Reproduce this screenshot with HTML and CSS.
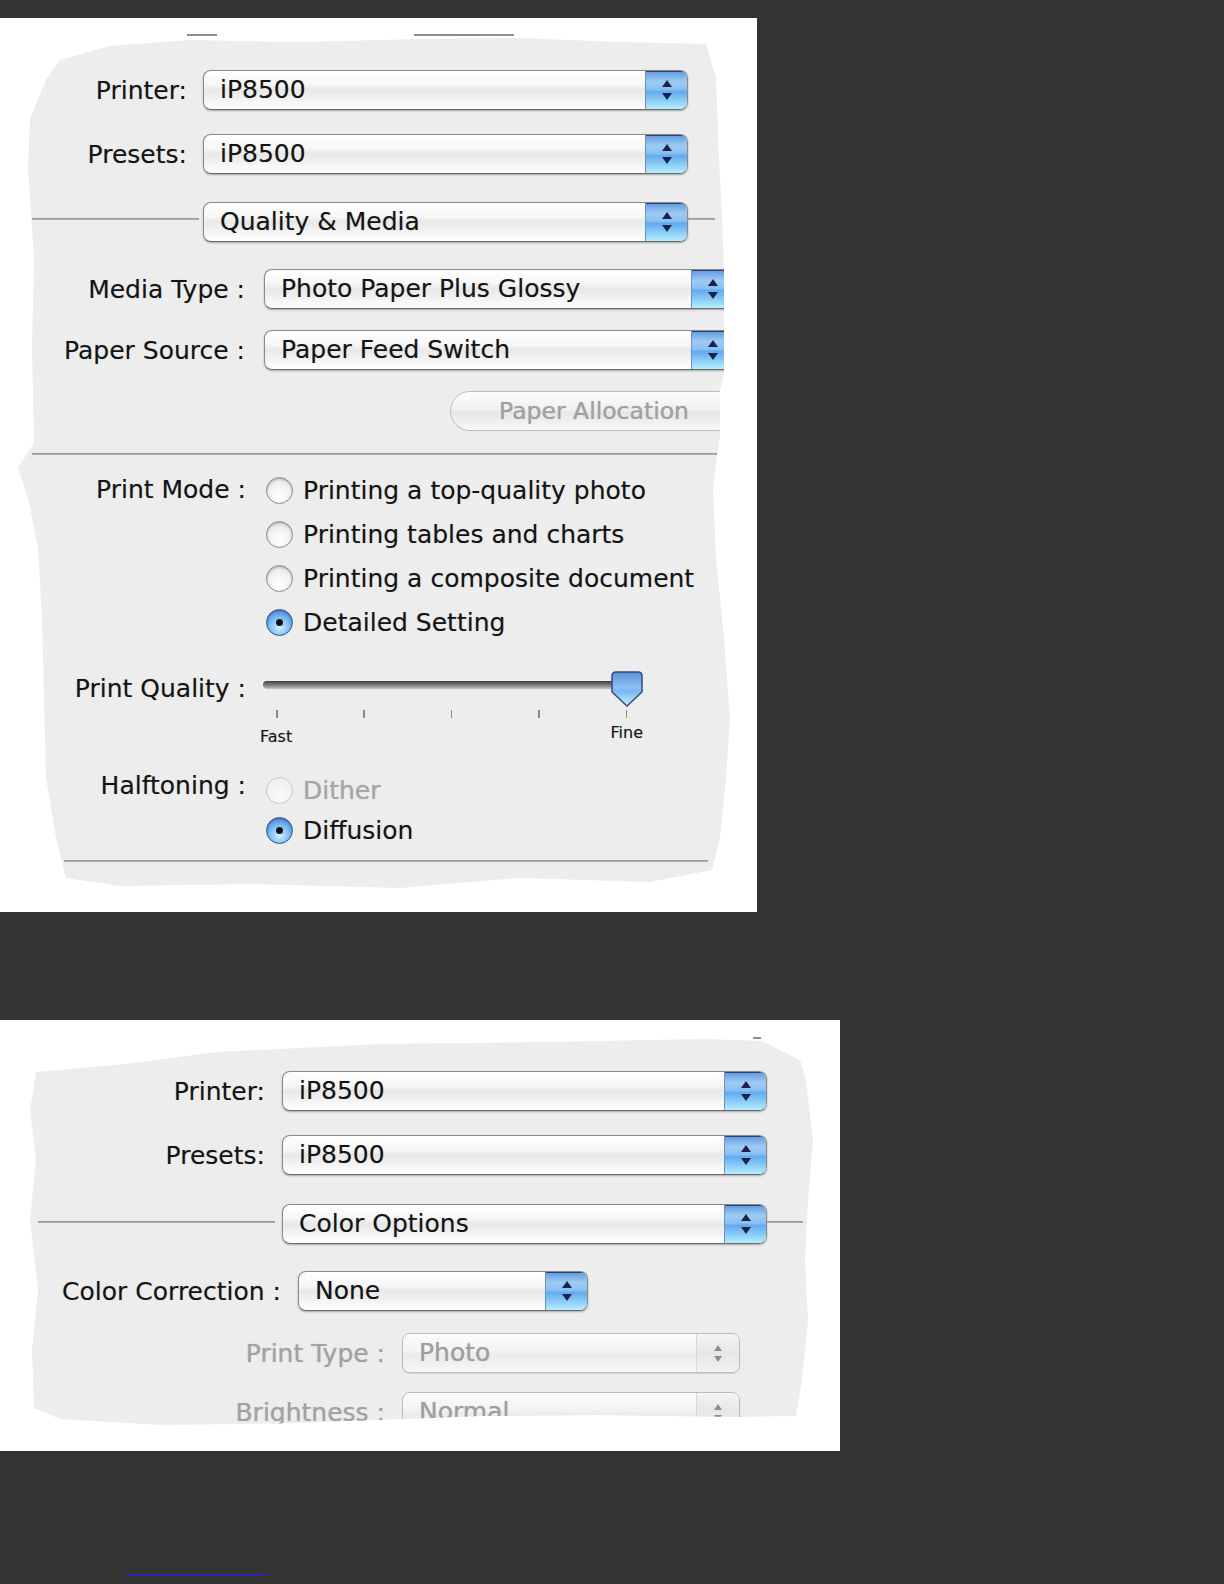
FILE: index.html
```html
<!DOCTYPE html>
<html lang="en">

<head>
    <meta charset="UTF-8">
    <meta name="viewport" content="width=device-width, initial-scale=1.0">
    <title>Print Dialog</title>
    <link rel="stylesheet" href="styles.css">
</head>

<body>
    <!-- Quality & Media pane -->
    <div class="panel panel-quality">
        <div class="sheet">
            <div class="row">
                <span class="label label-top">Printer:</span>
                <div class="popup popup-wide"><span class="popup-text">iP8500</span><span class="popup-arrows"></span></div>
            </div>
            <div class="row row-presets">
                <span class="label label-top">Presets:</span>
                <div class="popup popup-wide"><span class="popup-text">iP8500</span><span class="popup-arrows"></span></div>
            </div>
            <div class="row divider-row">
                <span class="rule rule-left"></span>
                <div class="popup popup-wide"><span class="popup-text">Quality &amp; Media</span><span class="popup-arrows"></span></div>
                <span class="rule rule-right"></span>
            </div>
            <div class="row row-media">
                <span class="label label-mid">Media Type :</span>
                <div class="popup popup-media"><span class="popup-text">Photo Paper Plus Glossy</span><span class="popup-arrows"></span></div>
            </div>
            <div class="row row-source">
                <span class="label label-mid">Paper Source :</span>
                <div class="popup popup-media"><span class="popup-text">Paper Feed Switch</span><span class="popup-arrows"></span></div>
            </div>
            <div class="row row-alloc">
                <div class="button">Paper Allocation</div>
            </div>
            <div class="separator separator-mid"></div>

            <div class="group group-mode">
                <span class="label label-group">Print Mode :</span>
                <div class="options">
                    <div class="option"><span class="radio"></span>Printing a top-quality photo</div>
                    <div class="option"><span class="radio"></span>Printing tables and charts</div>
                    <div class="option"><span class="radio"></span>Printing a composite document</div>
                    <div class="option"><span class="radio radio-on"></span>Detailed Setting</div>
                </div>
            </div>

            <div class="group group-quality">
                <span class="label label-group">Print Quality :</span>
                <div class="slider">
                    <div class="slider-bar">
                        <div class="track"></div>
                        <svg class="thumb" width="32" height="37" viewBox="0 0 32 37">
                            <defs>
                                <linearGradient id="thumbFill" x1="0" y1="0" x2="0" y2="1">
                                    <stop offset="0" stop-color="#5a92d8"/>
                                    <stop offset="0.45" stop-color="#8ec0f0"/>
                                    <stop offset="0.55" stop-color="#79b6f0"/>
                                    <stop offset="1" stop-color="#c4f0fd"/>
                                </linearGradient>
                            </defs>
                            <path d="M5 1 H27 Q31 1 31 5 V21 L16 35 L1 21 V5 Q1 1 5 1 Z" fill="url(#thumbFill)" stroke="#2f4c7e" stroke-width="1.5"/>
                        </svg>
                    </div>
                    <div class="ticks"><i></i><i></i><i></i><i></i><i></i></div>
                    <div class="scale"><span class="scale-fast">Fast</span><span class="scale-fine">Fine</span></div>
                </div>
            </div>

            <div class="group group-halftone">
                <span class="label label-group">Halftoning :</span>
                <div class="options">
                    <div class="option option-off"><span class="radio radio-off"></span>Dither</div>
                    <div class="option"><span class="radio radio-on"></span>Diffusion</div>
                </div>
            </div>
            <div class="separator separator-bottom"></div>
        </div>
    </div>

    <!-- Color Options pane -->
    <div class="panel panel-color">
        <div class="sheet">
            <div class="row">
                <span class="label label-top2">Printer:</span>
                <div class="popup popup-wide"><span class="popup-text">iP8500</span><span class="popup-arrows"></span></div>
            </div>
            <div class="row row-presets">
                <span class="label label-top2">Presets:</span>
                <div class="popup popup-wide"><span class="popup-text">iP8500</span><span class="popup-arrows"></span></div>
            </div>
            <div class="row divider-row divider-color">
                <span class="rule rule-left"></span>
                <div class="popup popup-wide"><span class="popup-text">Color Options</span><span class="popup-arrows"></span></div>
                <span class="rule rule-right"></span>
            </div>
            <div class="row row-correction">
                <span class="label label-correction">Color Correction :</span>
                <div class="popup popup-short"><span class="popup-text">None</span><span class="popup-arrows"></span></div>
            </div>
            <div class="row row-type">
                <span class="label label-off">Print Type :</span>
                <div class="popup popup-off"><span class="popup-text">Photo</span><span class="popup-arrows"></span></div>
            </div>
            <div class="row row-bright">
                <span class="label label-off">Brightness :</span>
                <div class="popup popup-off"><span class="popup-text">Normal</span><span class="popup-arrows"></span></div>
            </div>
        </div>
    </div>

    <div class="link-line"></div>
</body>

</html>
```

FILE: styles.css
```css
body {
    margin: 0;
    padding: 0;
    background-color: #333333;
    font-family: "DejaVu Sans", "Liberation Sans", sans-serif;
    color: #141414;
}

.panel {
    background-color: #fff;
}

.panel-quality {
    width: 757px;
    height: 894px;
    margin-top: 18px;
    /* scraps of the previous sheet peeking above the tear */
    background: linear-gradient(#8e8e8e, #8e8e8e) 187px 16px / 30px 2px no-repeat,
        linear-gradient(#8e8e8e, #8e8e8e) 414px 16px / 100px 2px no-repeat,
        #fff;
}

.panel-color {
    width: 840px;
    height: 431px;
    margin-top: 108px;
    background: linear-gradient(#8e8e8e, #8e8e8e) 753px 17px / 8px 2px no-repeat, #fff;
}

.sheet {
    box-sizing: border-box;
    height: 100%;
    background-color: #ededed;
    text-shadow: 0 0 1px rgba(0, 0, 0, 0.25);
}

.panel-quality .sheet {
    padding-top: 52px;
    clip-path: polygon(60px 42px, 110px 28px, 190px 22px, 300px 24px, 420px 21px, 520px 20px, 620px 24px, 706px 26px,
        716px 60px, 719px 140px, 722px 200px, 724px 250px, 724px 355px, 720px 372px, 720px 418px, 717px 440px,
        713px 470px, 716px 540px, 724px 620px, 730px 700px, 726px 760px, 720px 820px, 712px 852px,
        650px 864px, 520px 860px, 400px 870px, 250px 866px, 120px 868px, 66px 860px,
        56px 820px, 46px 760px, 44px 680px, 42px 600px, 38px 530px, 28px 480px, 18px 450px,
        34px 425px, 32px 330px, 34px 240px, 28px 150px, 30px 100px, 46px 62px);
}

.panel-color .sheet {
    padding-top: 51px;
    clip-path: polygon(36px 52px, 125px 44px, 217px 32px, 380px 24px, 542px 22px, 705px 19px, 762px 21px,
        800px 40px, 806px 60px, 813px 120px, 808px 180px, 805px 240px, 808px 300px, 802px 360px, 796px 396px,
        740px 397px, 600px 395px, 480px 396px, 400px 399px, 300px 403px, 160px 405px, 60px 399px, 34px 388px,
        32px 330px, 38px 270px, 30px 200px, 36px 140px, 30px 90px);
}

/* rows */

.row {
    display: flex;
    align-items: center;
    height: 40px;
}

.row-presets {
    margin-top: 24px;
}

.divider-row {
    margin-top: 28px;
    padding-left: 32px;
}

.row-media {
    margin-top: 27px;
}

.row-source,
.row-alloc {
    margin-top: 21px;
}

.label {
    flex-shrink: 0;
    text-align: right;
    font-size: 25px;
    white-space: nowrap;
}

.label-top {
    width: 187px;
    margin-right: 16px;
}

.label-mid {
    width: 245px;
    margin-right: 19px;
}

.label-group {
    width: 246px;
    margin-right: 20px;
    line-height: 44px;
}

.label-top2 {
    width: 265px;
    margin-right: 17px;
}

.label-correction {
    width: 281px;
    margin-right: 17px;
}

.label-off {
    width: 385px;
    margin-right: 17px;
    color: #a2a2a2;
}

.rule {
    height: 2px;
    margin-bottom: 6px;
    background: linear-gradient(#8f8f8f, #b9b9b9);
}

.rule-left {
    width: 167px;
    margin-right: 4px;
}

.rule-right {
    width: 27px;
}

.divider-color {
    margin-top: 29px;
    padding-left: 38px;
}

.divider-color .rule {
    margin-bottom: 4px;
}

.divider-color .rule-left {
    width: 237px;
    margin-right: 7px;
}

.divider-color .rule-right {
    width: 36px;
}

.row-correction {
    margin-top: 27px;
}

.row-type {
    margin-top: 22px;
}

.row-bright {
    margin-top: 19px;
}

/* aqua pop-up menus */

.popup {
    display: flex;
    flex-shrink: 0;
    box-sizing: border-box;
    height: 40px;
    border: 1px solid #8a8a8a;
    border-bottom-color: #6a6a6a;
    border-radius: 8px;
    overflow: hidden;
    background: linear-gradient(#ffffff 0%, #f7f7f7 35%, #e8e8e8 50%, #f1f1f1 70%, #ffffff 100%);
    box-shadow: 0 1px 2px rgba(0, 0, 0, 0.3);
}

.popup-wide {
    width: 485px;
}

.popup-media {
    width: 470px;
}

.popup-short {
    width: 290px;
}

.popup-text {
    flex: 1;
    padding-left: 16px;
    font-size: 25px;
    line-height: 38px;
    color: #141414;
    white-space: nowrap;
}

.popup-arrows {
    display: flex;
    flex-direction: column;
    align-items: center;
    justify-content: center;
    gap: 6px;
    width: 41px;
    border-left: 1px solid #6f8fbf;
    background: linear-gradient(#5d9ae0 0%, #9ecbf3 28%, #8bbff0 48%, #62abee 54%, #8fd0f8 80%, #b8eefc 100%);
    box-shadow: inset 0 1px 0 #2b3e6e;
}

.popup-arrows::before {
    content: "";
    border-left: 5px solid transparent;
    border-right: 5px solid transparent;
    border-bottom: 7px solid #1b2448;
}

.popup-arrows::after {
    content: "";
    border-left: 5px solid transparent;
    border-right: 5px solid transparent;
    border-top: 7px solid #1b2448;
}

.popup-off {
    width: 338px;
    border-color: #bcbcbc;
    box-shadow: 0 1px 1px rgba(0, 0, 0, 0.12);
    background: linear-gradient(#fbfbfb 0%, #f3f3f3 45%, #ebebeb 55%, #f6f6f6 100%);
}

.popup-off .popup-text {
    color: #9e9e9e;
}

.popup-off .popup-arrows {
    width: 42px;
    gap: 5px;
    border-left: 1px solid #d6d6d6;
    background: linear-gradient(#f4f4f4, #e6e6e6 50%, #f2f2f2);
    box-shadow: none;
}

.popup-off .popup-arrows::before {
    border-left-width: 4px;
    border-right-width: 4px;
    border-bottom: 6px solid #8c8c8c;
}

.popup-off .popup-arrows::after {
    border-left-width: 4px;
    border-right-width: 4px;
    border-top: 6px solid #8c8c8c;
}

/* push button */

.button {
    flex-shrink: 0;
    box-sizing: border-box;
    width: 288px;
    height: 40px;
    margin-left: 450px;
    border: 1px solid #bdbdbd;
    border-radius: 20px;
    background: linear-gradient(#fdfdfd, #efefef 50%, #e7e7e7 52%, #f7f7f7);
    color: #a0a0a0;
    font-size: 23.5px;
    line-height: 38px;
    text-align: center;
    white-space: nowrap;
}

.separator {
    height: 2px;
    background: linear-gradient(#8f8f8f, #b9b9b9);
}

.separator-mid {
    margin-top: 22px;
    margin-left: 32px;
    width: 685px;
}

.separator-bottom {
    margin-top: 10px;
    margin-left: 64px;
    width: 644px;
}

/* radio groups */

.group {
    display: flex;
    align-items: flex-start;
}

.group-mode {
    margin-top: 13px;
}

.option {
    display: flex;
    align-items: center;
    gap: 10px;
    height: 44px;
    font-size: 25px;
    white-space: nowrap;
}

.group-halftone {
    margin-top: 23px;
}

.group-halftone .label-group {
    line-height: 40px;
    margin-top: -4px;
}

.group-halftone .option {
    height: 40px;
}

.option-off {
    color: #a6a6a6;
}

.radio {
    display: flex;
    align-items: center;
    justify-content: center;
    box-sizing: border-box;
    width: 27px;
    height: 27px;
    border: 1.5px solid #8c8c8c;
    border-radius: 50%;
    background: radial-gradient(circle at 50% 70%, #ffffff 0%, #f0f0f0 55%, #cfcfcf 100%);
    box-shadow: inset 0 1px 2px rgba(0, 0, 0, 0.25);
}

.radio-on {
    border-color: #36568c;
    background: radial-gradient(circle at 50% 68%, #d8f4ff 0%, #86c4f4 40%, #4a8fde 80%, #3470c2 100%);
}

.radio-on::after {
    content: "";
    width: 7px;
    height: 7px;
    border-radius: 50%;
    background-color: #111;
}

.radio-off {
    border-color: #c8c8c8;
    background: radial-gradient(circle at 50% 70%, #fafafa, #ececec);
    box-shadow: none;
}

/* print quality slider */

.group-quality {
    margin-top: 23px;
}

.group-quality .label-group {
    margin-right: 17px;
}

.slider {
    width: 380px;
}

.slider-bar {
    position: relative;
    box-sizing: border-box;
    height: 40px;
    padding-top: 14px;
}

.track {
    width: 368px;
    height: 8px;
    border-radius: 4px;
    background: linear-gradient(#3f3f3f, #7b7b7b 50%, #c4c4c4);
}

.thumb {
    position: absolute;
    left: 348px;
    top: 4px;
}

.ticks {
    display: flex;
    justify-content: space-between;
    width: 351px;
    height: 8px;
    margin-top: 3px;
    margin-left: 13px;
}

.ticks i {
    width: 1.5px;
    background-color: #8a8a8a;
}

.scale {
    display: flex;
    justify-content: space-between;
    width: 383px;
    height: 24px;
    margin-top: 5px;
    margin-left: -3px;
    font-size: 16px;
    line-height: 20px;
}

.scale-fast {
    align-self: flex-end;
}

.scale-fine {
    align-self: flex-start;
}

.link-line {
    width: 143px;
    height: 2px;
    margin-top: 123px;
    margin-left: 126px;
    background-color: #2828a2;
}
```
